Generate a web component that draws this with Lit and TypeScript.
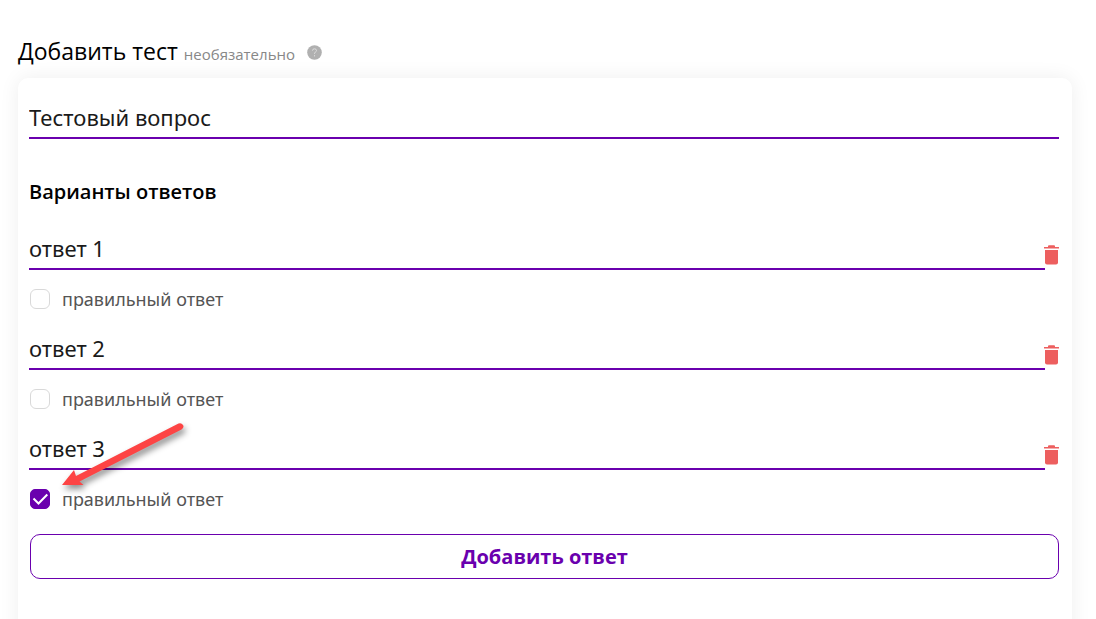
import { LitElement, html, css } from "lit";
import { customElement, property, state } from "lit/decorators.js";

interface Answer {
  text: string;
  correct: boolean;
}

@customElement("answer-row")
export class AnswerRow extends LitElement {
  @property() text = "";
  @property({ type: Boolean }) correct = false;

  static styles = css`
    :host {
      display: block;
      height: 100px;
    }
    .field {
      display: flex;
      align-items: flex-end;
    }
    .text {
      flex: 1;
      min-width: 0;
      box-sizing: border-box;
      height: 42px;
      padding: 0;
      border: 0;
      border-bottom: 2px solid #6a00ae;
      background: none;
      color: #1a1a1a;
      font: 400 22px/30px "Noto Sans", sans-serif;
      outline: none;
    }
    .remove {
      display: block;
      margin: 0 0 5px -1px;
      padding: 0;
      border: 0;
      background: none;
      cursor: pointer;
    }
    .remove svg {
      display: block;
    }
    .correct {
      display: flex;
      align-items: center;
      gap: 12px;
      width: max-content;
      margin: 16px 0 0 1px;
      color: #555;
      font: 400 18px/26px "Noto Sans", sans-serif;
    }
    .box {
      appearance: none;
      box-sizing: border-box;
      width: 20px;
      height: 20px;
      margin: 0;
      border: 1px solid #d9d9d9;
      border-radius: 6px;
      background: #fff;
    }
    .mark {
      display: grid;
    }
    .mark > * {
      grid-area: 1 / 1;
    }
    .mark svg {
      z-index: 1;
      pointer-events: none;
    }
    .box:checked {
      border-color: #6a00ae;
      border-radius: 5px;
      background: #6a00ae;
    }
  `;

  private toggle(e: Event) {
    this.correct = (e.target as HTMLInputElement).checked;
  }

  render() {
    return html`
      <div class="field">
        <input class="text" type="text" aria-label="ответ" .value=${this.text} />
        <button
          class="remove"
          type="button"
          aria-label="Удалить ответ"
          @click=${() => this.dispatchEvent(new CustomEvent("remove"))}
        >
          <svg width="15" height="20" viewBox="0 0 15 20" fill="#ed5f5f">
            <path d="M4 2V1.2Q4 .2 5 .2h5q1 0 1 1V2h4v1.600H0V2z" />
            <path d="M1 5h13v12.500q0 2-2 2H3q-2 0-2-2z" />
          </svg>
        </button>
      </div>
      <label class="correct">
        <span class="mark">
          <input class="box" type="checkbox" .checked=${this.correct} @change=${this.toggle} />
          ${this.correct
            ? html`<svg width="20" height="20" viewBox="0 0 20 20">
                <path d="M3.5 9.500l5 5L17.300 5.500" fill="none" stroke="#fff" stroke-width="2" />
              </svg>`
            : null}
        </span>
        правильный ответ
      </label>
    `;
  }
}

@customElement("app-root")
export class AppRoot extends LitElement {
  @state() private answers: Answer[] = [
    { text: "ответ 1", correct: false },
    { text: "ответ 2", correct: false },
    { text: "ответ 3", correct: true },
  ];

  static styles = css`
    :host {
      display: block;
      position: relative;
      height: 100vh;
      overflow: hidden;
      background: #fff;
      font-family: "Open Sans", "Noto Sans", sans-serif;
    }
    .page {
      padding: 34px 24px 0 18px;
    }
    .head {
      display: flex;
      align-items: baseline;
      height: 44px;
    }
    .title {
      margin: 0;
      color: #000;
      font-size: 23px;
      font-weight: 400;
      line-height: 34px;
    }
    .optional {
      margin-left: 6px;
      color: #888;
      font-size: 15px;
    }
    .help {
      align-self: flex-start;
      margin: 11px 0 0 12px;
    }
    .card {
      box-sizing: border-box;
      min-height: 620px;
      padding: 19px 13px 40px 11px;
      border-radius: 10px;
      background: #fff;
      box-shadow: 0 0 20px rgba(0, 0, 0, 0.07);
    }
    .question {
      display: block;
      box-sizing: border-box;
      width: 100%;
      height: 42px;
      padding: 0;
      border: 0;
      border-bottom: 2px solid #6a00ae;
      background: none;
      color: #1a1a1a;
      font: 400 22px/30px "Noto Sans", sans-serif;
      outline: none;
    }
    .subtitle {
      margin: 40px 0 23px;
      color: #000;
      font-size: 20px;
      font-weight: 600;
      line-height: 26px;
    }
    .add {
      display: block;
      box-sizing: border-box;
      width: calc(100% - 1px);
      height: 45px;
      margin: 6px 0 0 1px;
      padding: 0;
      border: 1px solid #6a00ae;
      border-radius: 10px;
      background: #fff;
      color: #6a00ae;
      font: 700 20px/26px "Open Sans", "Noto Sans", sans-serif;
      cursor: pointer;
    }
    .arrow {
      position: absolute;
      left: 52px;
      top: 412px;
      pointer-events: none;
    }
    .arrow path {
      filter: drop-shadow(2px 4px 3px rgba(0, 0, 0, 0.45));
    }
  `;

  private add() {
    this.answers = [...this.answers, { text: "", correct: false }];
  }

  private remove(answer: Answer) {
    this.answers = this.answers.filter((a) => a !== answer);
  }

  render() {
    return html`
      <main class="page">
        <header class="head">
          <h1 class="title">Добавить тест</h1>
          <span class="optional">необязательно</span>
          <svg class="help" width="15" height="15" viewBox="0 0 15 15">
            <circle cx="7.5" cy="7.5" r="7.3" fill="#b0b0b0" />
            <path
              d="M5.5 5.6Q5.6 3.8 7.5 3.8T9.5 5.5Q9.5 6.500 8.300 7.200 7.500 7.700 7.500 8.800M7.500 10.200v1.200"
              fill="none"
              stroke="#dedede"
            />
          </svg>
        </header>
        <section class="card">
          <input class="question" type="text" aria-label="Вопрос" .value=${"Тестовый вопрос"} />
          <h2 class="subtitle">Варианты ответов</h2>
          ${this.answers.map(
            (a) => html`<answer-row
              .text=${a.text}
              .correct=${a.correct}
              @remove=${() => this.remove(a)}
            ></answer-row>`
          )}
          <button class="add" type="button" @click=${this.add}>Добавить ответ</button>
        </section>
      </main>
      <svg class="arrow" width="145" height="95" viewBox="0 0 145 95" aria-hidden="true">
        <path
          d="M10 73L22 58l2 6L126.500 11.500q3-1 4.500 1.500t-1.500 4.500L27.500 69.500l4 3.500z"
          fill="#fd4444"
        />
      </svg>
    `;
  }
}
